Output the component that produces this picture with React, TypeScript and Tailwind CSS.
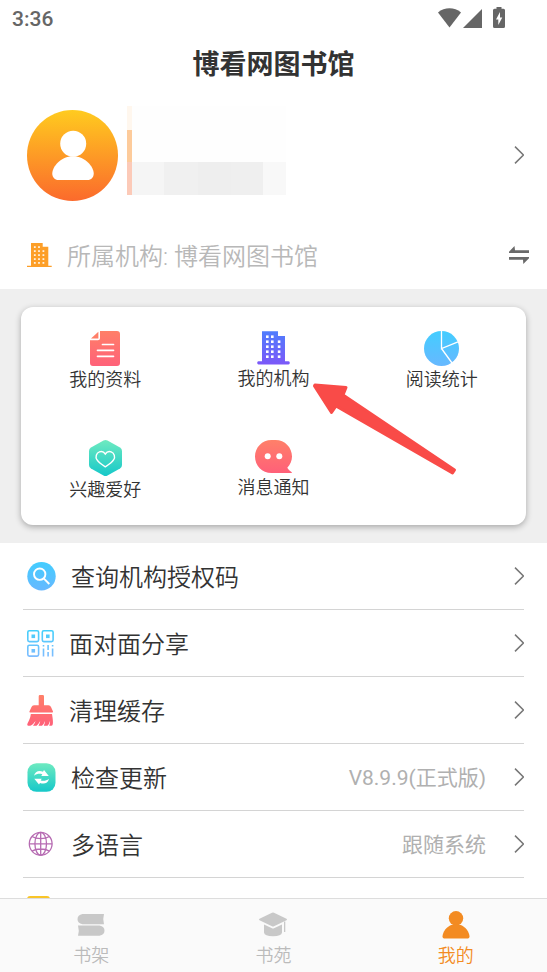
import type { ReactNode } from 'react';

function Gradient({ id, from, to }: { id: string; from: string; to: string }) {
    return (
        <defs>
            <linearGradient id={id} x1="0" y1="0" x2="0" y2="1">
                <stop offset="0" stopColor={from} />
                <stop offset="1" stopColor={to} />
            </linearGradient>
        </defs>
    );
}

function Chevron() {
    return (
        <svg width="10" height="18" viewBox="0 0 10 18" fill="none" stroke="#777" strokeWidth="1.5" className="shrink-0">
            <path d="M1 .6 9.4 9 1 17.4" />
        </svg>
    );
}

function Avatar() {
    return (
        <svg width="91" height="91" viewBox="0 0 91 91" className="mt-1 shrink-0">
            <Gradient id="avatar" from="#ffcb1f" to="#fb6a2c" />
            <circle cx="45.5" cy="45.5" r="45.5" fill="url(#avatar)" />
            <circle cx="46.2" cy="33.7" r="13" fill="#fff" />
            <path d="M46 46.3C58.5 46.3 66.7 57 66.7 63.5C66.7 67.5 64 70 60.7 70H31.3C28 70 25.3 67.5 25.3 63.5C25.3 57 33.5 46.3 46 46.3Z" fill="#fff" />
        </svg>
    );
}

function OrgIcon() {
    return (
        <svg width="25" height="24" viewBox="0 0 25 24" fill="#fd9f28" className="shrink-0">
            <path d="M4 0H15.7V3.7H21.3V22.7H24.7V24H0V22.7H4Z" />
            <g fill="#fff" fillOpacity=".85">
                {[3.2, 7.2, 11.2, 15.2, 19].map((y) => (
                    <g key={y}>
                        <rect x="6.9" y={y} width="1.8" height="1.8" />
                        <rect x="11.1" y={y} width="1.8" height="1.8" />
                        {y > 4 && <rect x="15.5" y={y} width="1.8" height="1.8" />}
                    </g>
                ))}
            </g>
        </svg>
    );
}

function SwapIcon() {
    return (
        <svg width="20" height="18" viewBox="0 0 20 18" fill="#6a6a6a">
            <path d="M0 6.9V5.7L5.5 0L6 4.2H20V6.9ZM20 11.1V12.2L14.3 18L14 13.8H0V11.1Z" />
        </svg>
    );
}

function DocIcon() {
    return (
        <svg width="30" height="35" viewBox="0 0 30 35">
            <Gradient id="doc" from="#ff7f68" to="#ff6179" />
            <path d="M10 0H27Q30 0 30 3V32Q30 35 27 35H3Q0 35 0 32V9.2H8Q10 9.2 10 7.2Z" fill="url(#doc)" />
            <path d="M8.4.8V7.5H1Z" fill="#ff7f68" />
            <path d="M12.5 13.5H23.5M7.5 19.3H23.5M7.5 25.3H23.5" stroke="#fff" strokeWidth="1.7" strokeLinecap="round" />
        </svg>
    );
}

function BuildingIcon() {
    return (
        <svg width="33" height="34" viewBox="0 0 33 34">
            <Gradient id="building" from="#4f7dfd" to="#7c58f8" />
            <path d="M5 .3H21V5H28V30.3H31.5Q32.8 30.3 32.8 31.8T31.5 33.4H1.5Q.2 33.4 .2 31.8T1.5 30.3H5Z" fill="url(#building)" />
            <g fill="#fff">
                {[4.4, 9.4, 14.4, 19.4, 24.4].map((y) => (
                    <g key={y}>
                        <rect x="9" y={y} width="2.6" height="2.6" />
                        <rect x="14" y={y} width="2.6" height="2.6" />
                        {y > 5 && <rect x="20.8" y={y} width="2.6" height="2.6" />}
                    </g>
                ))}
            </g>
        </svg>
    );
}

function PieIcon() {
    return (
        <svg width="35" height="35" viewBox="0 0 35 35">
            <Gradient id="pie" from="#43cdff" to="#67b8ff" />
            <circle cx="17.5" cy="17.5" r="17.5" fill="url(#pie)" />
            <path d="M17.5 0V17.5L34 10.8M17.5 17.5L28 32" fill="none" stroke="#fff" strokeWidth="1.3" />
        </svg>
    );
}

function HeartIcon() {
    return (
        <svg width="33" height="36" viewBox="0 0 33 36">
            <Gradient id="heart" from="#6eeac0" to="#16c8c9" />
            <path d="M14.5.6Q16.5-.4 18.5.6L31 7.6Q33 8.8 33 11V25Q33 27.2 31 28.4L18.5 35.4Q16.5 36.4 14.5 35.4L2 28.4Q0 27.2 0 25V11Q0 8.8 2 7.6Z" fill="url(#heart)" />
            <path d="M16.3 14C14.8 11.7 12.4 11.2 10.4 11.9C7.2 13.1 6.2 16.9 7.9 19.7C9.5 22.4 13 24.8 16.3 26.8C19.6 24.8 23.1 22.4 24.7 19.7C26.4 16.9 25.4 13.1 22.2 11.9C20.2 11.2 17.8 11.7 16.3 14Z" fill="none" stroke="#fff" strokeWidth="1.4" />
        </svg>
    );
}

function MessageIcon() {
    return (
        <svg width="37" height="34" viewBox="0 0 37 34">
            <Gradient id="message" from="#ff8069" to="#ff6079" />
            <path d="M16.5 0H20.5C30 0 37 7.5 37 16.5C37 20.5 35.3 24.7 32.3 27.8C33.3 29.5 35 31.3 36.8 32.2C37 33 36.5 33 36 33H16.5C7 33 0 25.5 0 16.5S7 0 16.5 0Z" fill="url(#message)" />
            <circle cx="12.7" cy="16.3" r="3" fill="#fff" />
            <circle cx="24.3" cy="16.3" r="3" fill="#fff" />
        </svg>
    );
}

function SearchIcon() {
    return (
        <svg width="29" height="29" viewBox="0 0 29 29">
            <Gradient id="search" from="#43cdff" to="#67b8ff" />
            <circle cx="14.5" cy="14.3" r="14.2" fill="url(#search)" />
            <g fill="none" stroke="#fff" strokeWidth="1.9">
                <circle cx="12.7" cy="12.2" r="5.7" />
                <path d="M16.7 16.3L22.3 22" />
            </g>
        </svg>
    );
}

function QrIcon() {
    return (
        <svg width="27" height="27" viewBox="0 0 27 27">
            <defs>
                <linearGradient id="qr" x1="0" y1="0" x2="0" y2="27" gradientUnits="userSpaceOnUse">
                    <stop offset="0" stopColor="#43d0fb" />
                    <stop offset="1" stopColor="#7fbcff" />
                </linearGradient>
            </defs>
            <g fill="none" stroke="url(#qr)" strokeWidth="1.6">
                <rect x=".8" y=".8" width="10.8" height="10.8" rx="1.5" />
                <rect x="15.3" y=".8" width="10.8" height="10.8" rx="1.5" />
                <rect x=".8" y="15.3" width="10.8" height="10.8" rx="1.5" />
                <path d="M16.5 15V16.5M16.5 18.5V26.5M21.1 15V20M21.1 22V26.5M25.6 15V16.5M25.6 18.5V26.5" />
            </g>
            <g fill="url(#qr)">
                <rect x="4.5" y="4.5" width="3.6" height="3.6" />
                <rect x="19" y="4.5" width="3.6" height="3.6" />
                <rect x="4.5" y="19" width="3.6" height="3.6" />
            </g>
        </svg>
    );
}

function BroomIcon() {
    return (
        <svg width="27" height="31" viewBox="0 0 27 31">
            <defs>
                <linearGradient id="broom" x1="0" y1="0" x2="0" y2="31" gradientUnits="userSpaceOnUse">
                    <stop offset="0" stopColor="#ff8069" />
                    <stop offset="1" stopColor="#ff6079" />
                </linearGradient>
            </defs>
            <g fill="url(#broom)">
                <path d="M11.7 1.2Q11.7 0 12.9 0H15.8Q17 0 17 1.2V10.3H21.5Q23.3 10.3 24 12L26 16.5Q26.3 17.6 25.2 17.6H3.2Q2.1 17.6 2.4 16.5L4.5 12Q5.2 10.3 7 10.3H11.7Z" />
                <path d="M3.8 18.9H25C25.7 23 26.3 27 25.7 29.5Q25.4 30.7 24.2 30.7H22.2Q23.3 28.5 23 26Q22.3 29 20.5 30.7H16.8Q18 28.5 18 26Q17 29 15 30.7H11.5Q13 28.5 13.2 26Q11.7 29 9.5 30.7H6Q8 28.5 8.5 26Q6.5 29 4 30.5Q1.5 31.3.4 30.2C-.5 28.5 3.3 25 3.8 18.9Z" />
            </g>
        </svg>
    );
}

function UpdateIcon() {
    return (
        <svg width="29" height="29" viewBox="0 0 29 29">
            <Gradient id="update" from="#6eeac0" to="#16c8c9" />
            <rect x=".5" y=".2" width="28" height="28.6" rx="9" fill="url(#update)" />
            <g fill="#fff">
                <path d="M7 12.8C8 8.3 12 7 16 8.8L17 7L21.8 13L14.3 12.9L15.3 11.3C12.5 10.4 9.6 10.8 7 12.8Z" />
                <path d="M22 15.7C21 20.3 17 21.6 13 19.9L12 21.6L7.3 15.7L14.7 15.8L13.7 17.4C16.5 18.3 19.4 17.8 22 15.7Z" />
            </g>
        </svg>
    );
}

function GlobeIcon() {
    return (
        <svg width="29" height="29" viewBox="0 0 29 29" fill="none" stroke="#b66bb2" strokeWidth="1.3">
            <circle cx="13.7" cy="13.8" r="11.4" />
            <ellipse cx="13.7" cy="13.8" rx="5.8" ry="11.4" />
            <path d="M13.7 2.3V25.3M2.3 13.8H25.1M5 6.5C9.5 9.3 17.9 9.3 22.4 6.5M5 21.1C9.5 18.3 17.9 18.3 22.4 21.1" />
        </svg>
    );
}

function BooksIcon() {
    return (
        <svg width="28" height="28" viewBox="0 0 28 28" fill="#c8c8c8">
            <path d="M5.5 3.1H27Q25.5 8 27 13.2H5.5Q.5 12.2.5 8.2T5.5 3.1Z" />
            <path d="M1 14.6H22.5Q27.5 15.6 27.5 19.7T22.5 24.7H1Q2.5 19.7 1 14.6Z" />
        </svg>
    );
}

function CapIcon() {
    return (
        <svg width="30" height="28" viewBox="0 0 30 28" fill="#c8c8c8">
            <path d="M14 1.8Q15 1.4 16 1.8L28.5 7.8Q29.7 8.5 28.5 9.2L16 15.3Q15 15.7 14 15.3L1.5 9.2Q.3 8.5 1.5 7.8Z" />
            <path d="M6 13.5L14 17.3Q15 17.7 16 17.3L24 13.5V21.5Q23.5 25.3 15 25.3T6 21.5Z" />
            <path d="M26 10.5H27.3V21H26Z" />
        </svg>
    );
}

function PersonIcon() {
    return (
        <svg width="28" height="28" viewBox="0 0 28 28" fill="#f38b22">
            <circle cx="14" cy="7.3" r="7.2" />
            <path d="M10 13.7H18C23.5 15.3 27.3 21 27.5 25.5Q27.5 27.5 25.8 27.5H2.2Q.5 27.5.5 25.5C.7 21 4.5 15.3 10 13.7Z" />
        </svg>
    );
}

function Pointer() {
    return (
        <svg width="146" height="94" viewBox="0 0 146 94" className="pointer-events-none absolute top-[76px] left-[122px] z-10">
            <path d="M4 2L35 4.5L32 12L143.5 87L141.5 90L25 23L20.5 29.5L3.5 3Z" fill="#f94b48" stroke="#f94b48" strokeWidth="3" strokeLinejoin="round" />
        </svg>
    );
}

const shortcuts: { label: string; icon: ReactNode; marked?: boolean }[] = [
    { label: '我的资料', icon: <DocIcon /> },
    { label: '我的机构', icon: <BuildingIcon />, marked: true },
    { label: '阅读统计', icon: <PieIcon /> },
    { label: '兴趣爱好', icon: <HeartIcon /> },
    { label: '消息通知', icon: <MessageIcon /> },
];

const settings: { label: string; icon: ReactNode; value?: string }[] = [
    { label: '查询机构授权码', icon: <SearchIcon /> },
    { label: '面对面分享', icon: <QrIcon /> },
    { label: '清理缓存', icon: <BroomIcon /> },
    { label: '检查更新', icon: <UpdateIcon />, value: 'V8.9.9(正式版)' },
    { label: '多语言', icon: <GlobeIcon />, value: '跟随系统' },
];

const tabs = [
    { label: '书架', icon: <BooksIcon />, active: false },
    { label: '书苑', icon: <CapIcon />, active: false },
    { label: '我的', icon: <PersonIcon />, active: true },
];

function StatusBar() {
    return (
        <div className="flex h-9 items-center justify-between pr-[42px] pl-3 text-[#666]">
            <span className="pt-0.5 text-[21px] leading-9 font-medium">3:36</span>
            <svg width="67" height="22" viewBox="0 0 67 22" fill="#666">
                <path d="M0 5.5C6.5-.1 16.5-.1 23 5.5L11.5 20.5Z" />
                <path d="M25 21L44 2V21Z" />
                <path d="M58.5 0H63.5V1.8H65.5Q67 1.8 67 3.3V19.5Q67 21 65.5 21H56.5Q55 21 55 19.5V3.3Q55 1.8 56.5 1.8H58.5Z" />
                <path d="M62 5L58 12.5H60.3V18L64.3 10.5H62Z" fill="#fff" />
            </svg>
        </div>
    );
}

function ProfileName() {
    return (
        <span className="flex h-[89px] w-[159px]">
            <span className="flex w-[5px] flex-col">
                <span className="h-6 bg-[#fff7ee]" />
                <span className="h-8 bg-[#fdcb9b]" />
                <span className="grow bg-[#fccab8]" />
            </span>
            <span className="flex grow flex-col">
                <span className="h-14 bg-[#fefefe]" />
                <span className="flex grow">
                    <span className="w-8 bg-[#f5f5f5]" />
                    <span className="w-[34px] bg-[#f0f0f0]" />
                    <span className="w-[33px] bg-[#eee]" />
                    <span className="w-8 bg-[#efefef]" />
                    <span className="grow bg-[#f8f8f8]" />
                </span>
            </span>
        </span>
    );
}

export default function App() {
    return (
        <div className="flex h-screen flex-col bg-white font-[Roboto,'Noto_Sans_CJK_SC',sans-serif] text-[#333]">
            <main className="min-h-0 flex-1 overflow-hidden">
                <StatusBar />
                <h1 className="pt-0.5 text-center text-[27px] leading-[54px] font-bold">博看网图书馆</h1>

                <button type="button" aria-label="个人资料" className="flex w-full gap-[9px] pt-3.5 pr-[23px] pb-5 pl-[27px]">
                    <Avatar />
                    <ProfileName />
                    <span className="ml-auto self-center pt-0.5">
                        <Chevron />
                    </span>
                </button>

                <div className="flex h-[68px] items-center pr-[18px] pl-[27px]">
                    <OrgIcon />
                    <span className="ml-[15px] pt-1 text-2xl font-[350] text-[#b8b8b8]">所属机构: 博看网图书馆</span>
                    <button type="button" aria-label="切换机构" className="ml-auto">
                        <SwapIcon />
                    </button>
                </div>

                <section className="bg-[#efefef] px-[21px] py-[18px]">
                    <div className="grid grid-cols-3 rounded-xl bg-white shadow-[0_2px_6px_rgba(0,0,0,0.3)]">
                        {shortcuts.map((item) => (
                            <div key={item.label} className="relative h-[109px]">
                                <button type="button" className="flex h-full w-full flex-col items-center pt-6 text-lg leading-7 font-[350]">
                                    {item.icon}
                                    {item.label}
                                </button>
                                {item.marked && <Pointer />}
                            </div>
                        ))}
                    </div>
                </section>

                <ul className="px-[23px]">
                    {settings.map((item) => (
                        <li key={item.label} className="border-b border-[#d4d4d4]">
                            <button type="button" className="flex h-[66px] w-full items-center pl-1 text-left text-2xl font-[350]">
                                {item.icon}
                                <span className="ml-[15px] pt-1">{item.label}</span>
                                <span className="mr-7 ml-auto pt-0.5 text-[21px] font-normal text-[#b0b0b0]">{item.value}</span>
                                <Chevron />
                            </button>
                        </li>
                    ))}
                    <li className="flex h-[66px] items-center pl-1">
                        <svg width="23" height="30" viewBox="0 0 23 30">
                            <rect width="23" height="30" rx="3" fill="#f9c528" />
                        </svg>
                    </li>
                </ul>
            </main>

            <nav className="grid h-[74px] shrink-0 grid-cols-3 border-t border-[#ddd] bg-[#fafafa]">
                {tabs.map((tab) => (
                    <a
                        key={tab.label}
                        href="#"
                        className={`flex flex-col items-center gap-1 pt-3 text-lg leading-[26px] font-[350] ${tab.active ? 'text-[#f38b22]' : 'text-[#bbb]'}`}
                    >
                        {tab.icon}
                        {tab.label}
                    </a>
                ))}
            </nav>
        </div>
    );
}
